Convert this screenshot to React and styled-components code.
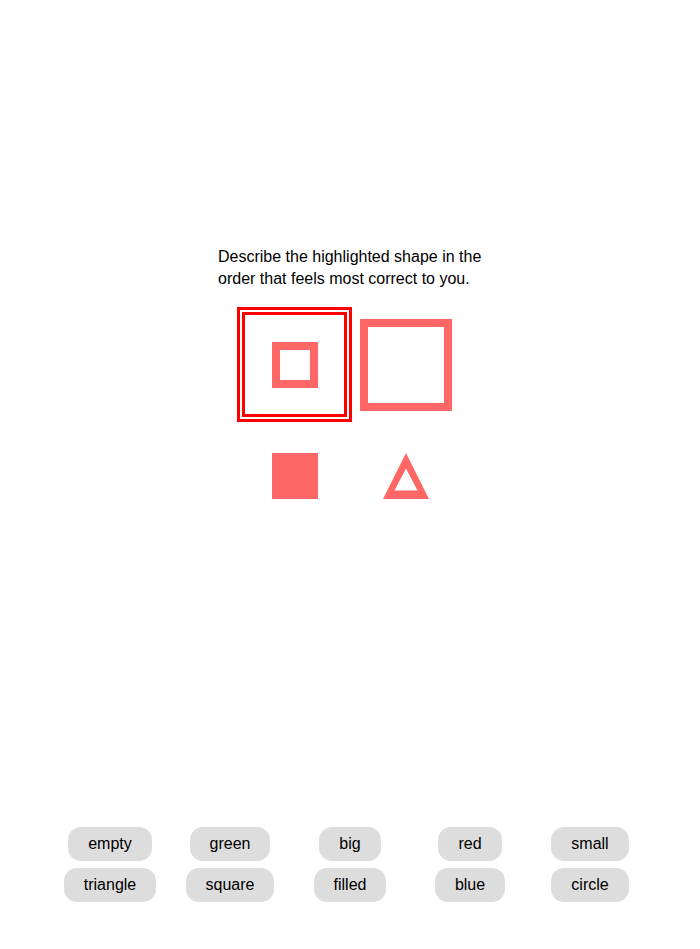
import React from "react";
import styled, { createGlobalStyle } from "styled-components";

const Global = createGlobalStyle`
  html, body { margin: 0; padding: 0; background: #fff; }
  body { font-family: "Liberation Sans", Arial, sans-serif; color: #000; }
`;

const Page = styled.div`
  width: 700px;
  min-height: 949px;
  display: flex;
  flex-direction: column;
  align-items: center;
  box-sizing: border-box;
  padding: 246px 0 47px;
`;

const Prompt = styled.p`
  width: 264px;
  margin: 0;
  font-size: 16px;
  line-height: 22px;
  text-align: left;
  white-space: nowrap;
`;

const ShapeGrid = styled.div`
  margin-top: 19px;
  display: grid;
  grid-template-columns: repeat(2, 111px);
  grid-auto-rows: 111px;
`;

const Cell = styled.div`
  position: relative;
  display: flex;
  align-items: center;
  justify-content: center;

  &::after {
    content: "";
    display: ${(p) => (p.$highlighted ? "block" : "none")};
    position: absolute;
    inset: -2px;
    border: 8px double #ff0000;
    pointer-events: none;
  }
`;

const Spacer = styled.div`
  flex: 1;
`;

const WordGrid = styled.div`
  display: grid;
  grid-template-columns: repeat(5, 120px);
  row-gap: 7px;
`;

const Word = styled.button`
  justify-self: center;
  height: 34px;
  padding: 0 20px;
  border: none;
  border-radius: 13px;
  background: #dddddd;
  color: #000;
  font-family: "Liberation Sans", Arial, sans-serif;
  font-size: 16px;
  cursor: pointer;
`;

const SHAPE = "#ff6666";

const Square = ({ size, filled }) => (
  <svg width={size} height={size} viewBox={`0 0 ${size} ${size}`}>
    {filled ? (
      <rect x="0" y="0" width={size} height={size} fill={SHAPE} />
    ) : (
      <rect x="4" y="4" width={size - 8} height={size - 8} fill="none" stroke={SHAPE} strokeWidth="8" />
    )}
  </svg>
);

const Triangle = () => (
  <svg width="46" height="46" viewBox="0 0 46 46">
    <path
      d="M23 0 L46 46 L0 46 Z M23 15.5 L11.5 37.5 L34.5 37.5 Z"
      fill={SHAPE}
      fillRule="evenodd"
    />
  </svg>
);

const words = ["empty", "green", "big", "red", "small", "triangle", "square", "filled", "blue", "circle"];

export default function App() {
  return (
    <>
      <Global />
      <Page>
        <Prompt>
          Describe the highlighted shape in the
          <br />
          order that feels most correct to you.
        </Prompt>
        <ShapeGrid>
          <Cell $highlighted>
            <Square size={46} />
          </Cell>
          <Cell>
            <Square size={92} />
          </Cell>
          <Cell>
            <Square size={46} filled />
          </Cell>
          <Cell>
            <Triangle />
          </Cell>
        </ShapeGrid>
        <Spacer />
        <WordGrid>
          {words.map((w) => (
            <Word key={w}>{w}</Word>
          ))}
        </WordGrid>
      </Page>
    </>
  );
}
